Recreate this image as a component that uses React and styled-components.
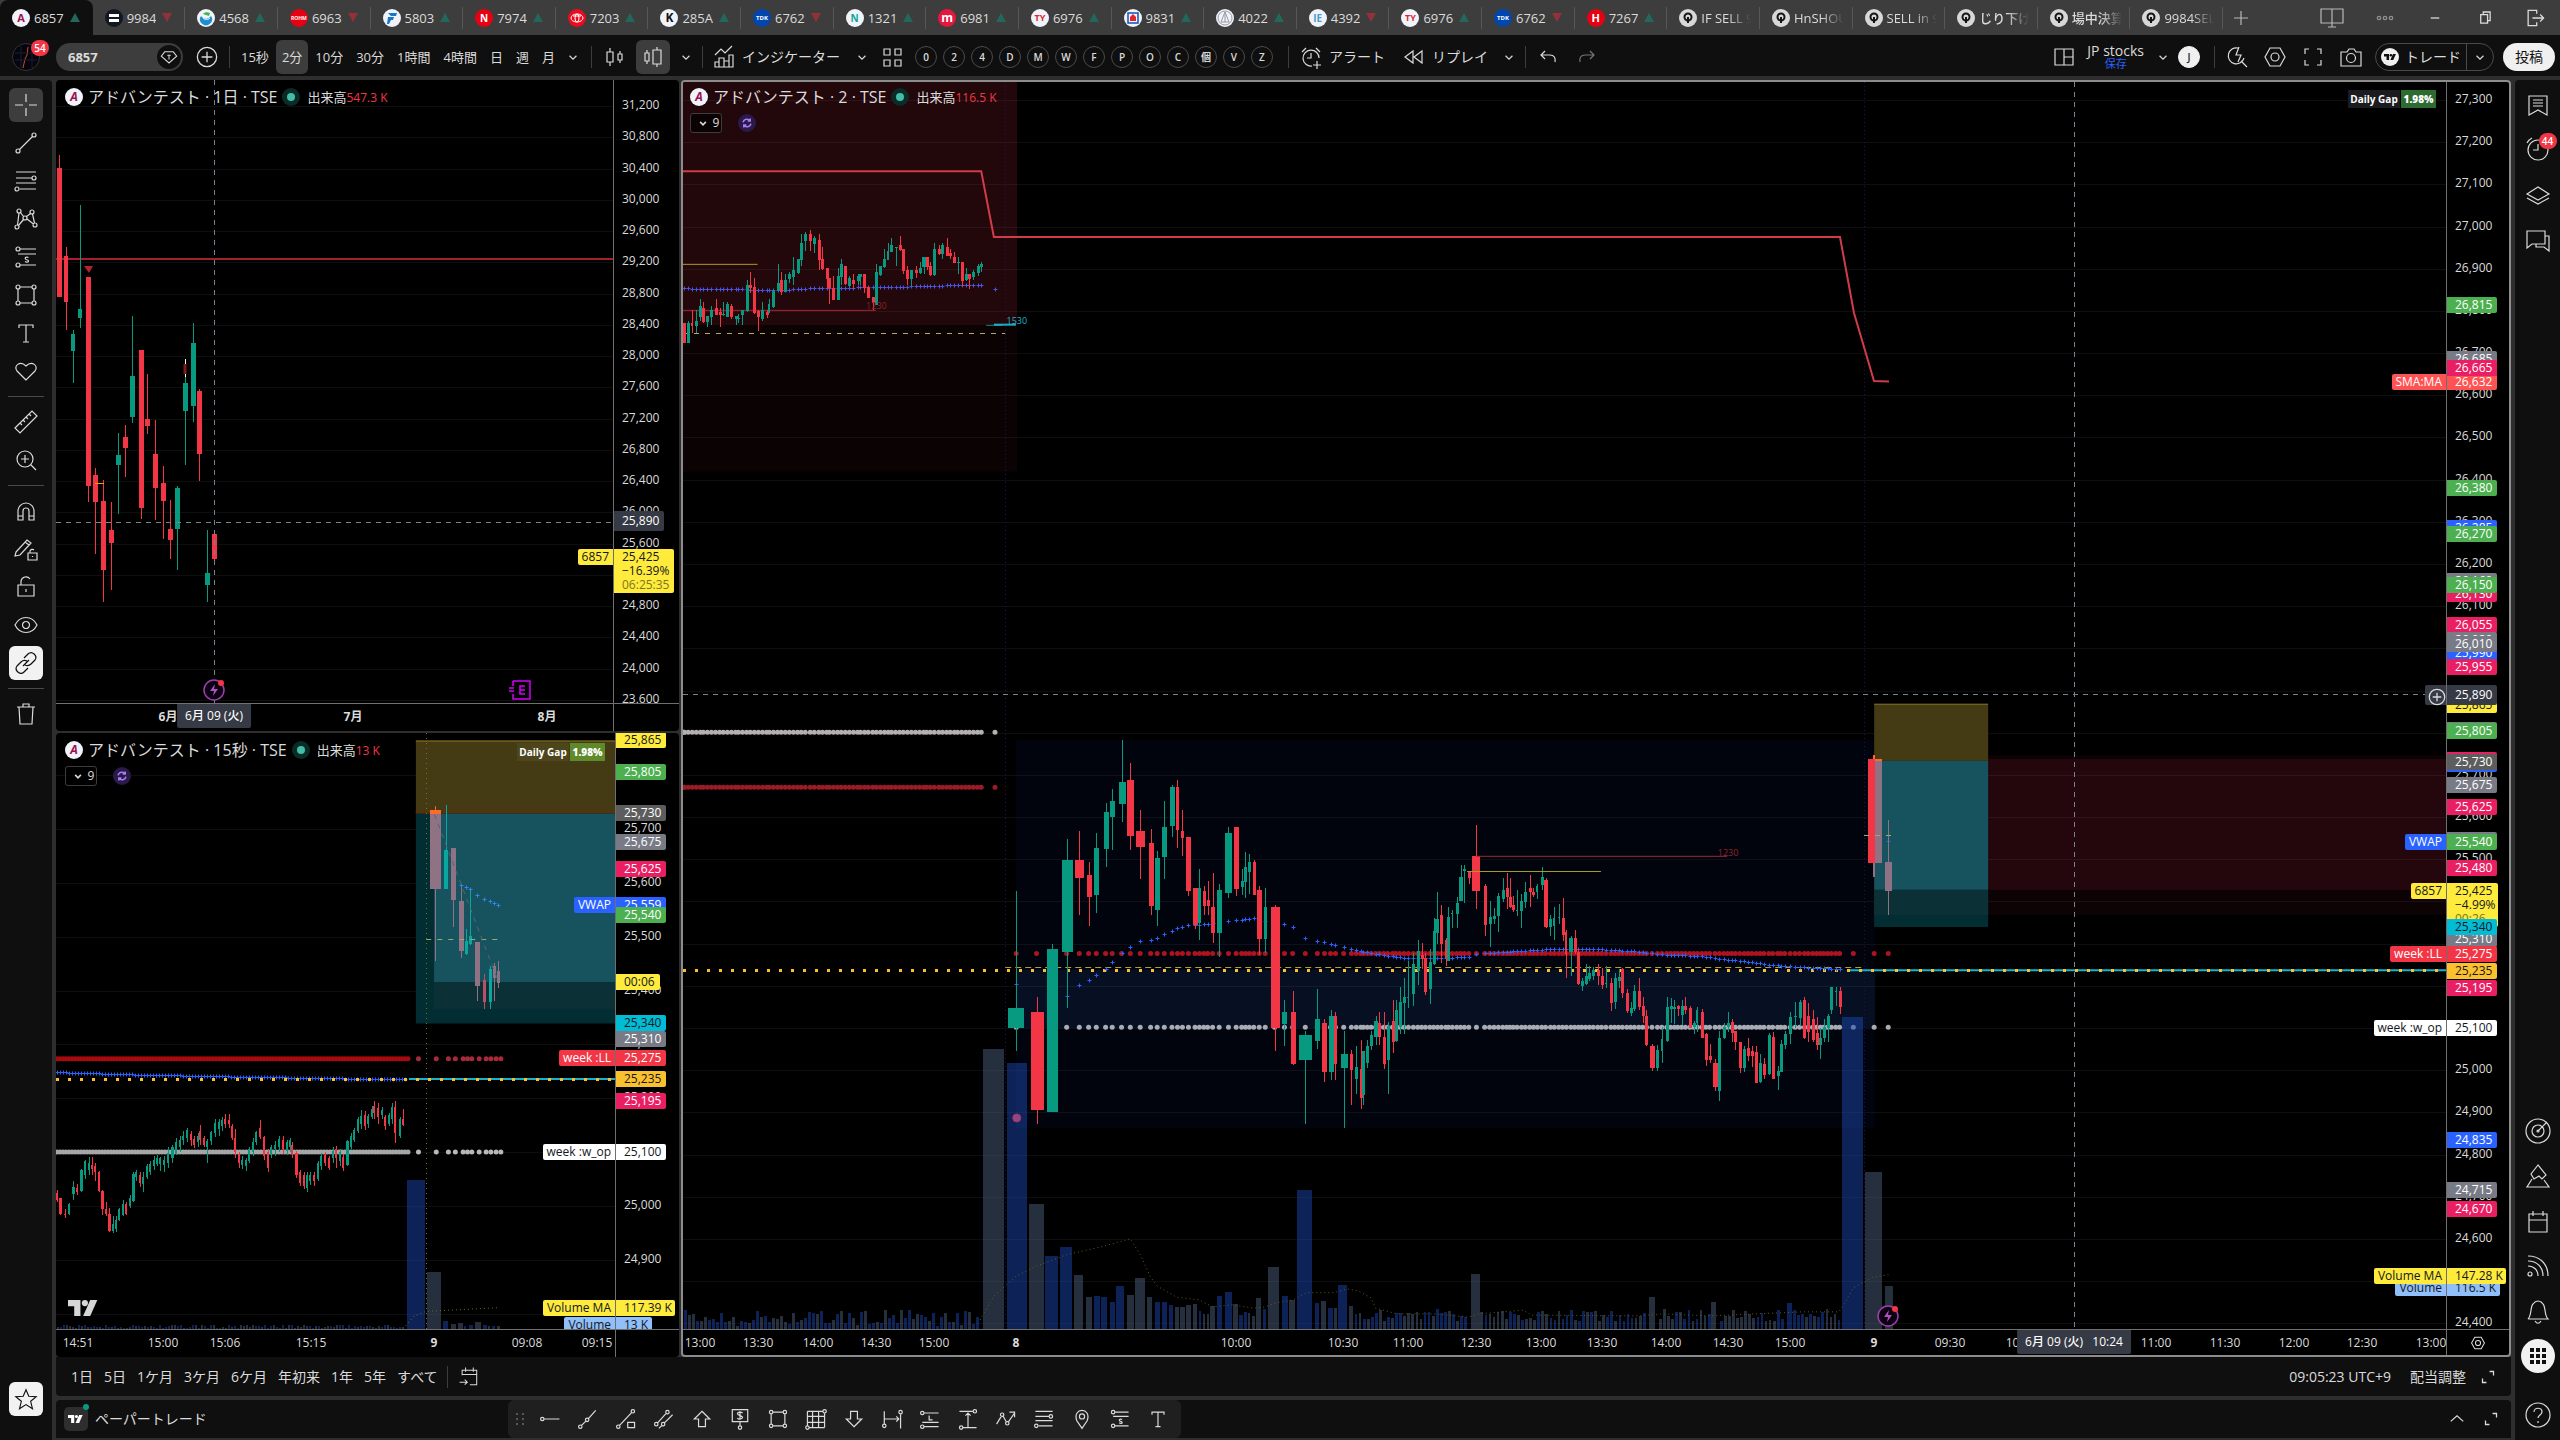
import React from "react";
import styled, { createGlobalStyle } from "styled-components";

const Global = createGlobalStyle`
  *, *::before, *::after { box-sizing: border-box; }
  body { margin: 0; background: #2e2e2e; color: #dbdbdb;
    font: 14px/18px "Open Sans", "Noto Sans CJK JP", sans-serif; }
  button, input { font: inherit; color: inherit; background: none; border: 0; padding: 0; margin: 0; }
  svg { display: block; flex: none; }
`;

const C = { up: "#089981", down: "#f23645", mauve: "#8f7385", aqua: "#0aa6a0", orange: "#ff6a2a", rose: "#b85068" };
const BG = {
  green: "#4caf50", pink: "#e91e63", gray: "#787b86", ash: "#5d5d5d", blue: "#2962ff", yellow: "#ffeb3b",
  cyan: "#00bcd4", red: "#f23645", coral: "#ff5252", amber: "#fbc02d", white: "#ffffff", sky: "#90bff9", slate: "#363a45",
};
const DARK_TEXT = ["yellow", "cyan", "amber", "white", "sky"];

/* ---------- icons, drawn on a 28px grid ---------- */
const c = (x, y, r) => `M${x - r} ${y}a${r} ${r} 0 1 0 ${2 * r} 0a${r} ${r} 0 1 0 ${-2 * r} 0`;
const ICONS = {
  cross: "M14 3v8M14 17v8M3 14h8M17 14h8",
  trend: c(6, 22, 2) + c(22, 6, 2) + "M7.5 20.5l13-13",
  fib: "M4 5h20M4 11h16M4 16h20M8 22h16" + c(22, 11, 2) + c(5, 22, 2),
  pattern: c(7, 6, 2) + c(20, 7, 2) + c(5, 22, 2) + c(23, 20, 2) + c(13, 13, 2) + "M5.500 20L7 8M8.500 7.500l3 4M14.500 11.500l4-3M20.500 9l2 9M6.500 20.500l5-6M15 14l6.500 5",
  forecast: c(6, 6, 2) + c(6, 22, 2) + "M8 6h16M6 11h18M8 22h16M16.500 14.500c-2-1-4 0-3 1.500s3 .5 3 2-2 1.500-3.500.5",
  rect: c(6, 6, 2) + c(22, 6, 2) + c(6, 22, 2) + c(22, 22, 2) + "M8 6h12M8 22h12M6 8v12M22 8v12",
  text: "M7 9V6h14v3M14 6v17M11 23h6",
  heart: "M14 23L5 14c-4-5 3-11 9-5c6-6 13 0 9 5z",
  ruler: "M3 20L20 3l5 5L8 25zM8 15l2 2M11 12l2 2M14 9l2 2M17 6l2 2",
  zoom: c(13, 13, 8) + "M19 19l5 5M13 9v8M9 13h8",
  magnet: "M6 23v-9a8 8 0 0 1 16 0v9h-5v-9a3 3 0 0 0-6 0v9zM6 19h5M17 19h5",
  penlock: "M4 17L15 5l4 3L8 20l-5 1zM13 7l4 3M16 18h9v7h-9zM18 18v-2a2.500 2.500 0 0 1 4-1M20.500 21v1",
  lock: "M6 12h16v11H6zM9 12V8a5 5 0 0 1 9-2M14 16v3",
  eye: "M3 14c5-10 17-10 22 0c-5 10-17 10-22 0z" + c(14, 14, 3.5),
  link: "M12 9l4-4c4-4 10 2 7 6l-4 4c-2 2-4 2-6 1M16 19l-4 4c-4 4-10-2-7-6l4-4c2-2 4-2 6-1M11 17l6-6",
  trash: "M5 7h18M7 7l1 17h12l1-17M11 7V4h6v3",
  star: "M14 4l3 7 8 .5-6 5 2 8-7-4.500-7 4.500 2-8-6-5 8-.5z",
  plusC: c(14, 14, 9) + "M14 9v10M9 14h10",
  gem: "M9 8h10l4 5-9 8-9-8zM14 12v5M12 12h4",
  chev: "M10 12.500l4 4 4-4",
  up: "M6 17l8-7 8 7",
  candles: "M9 5v4M9 19v4M6 9h6v10H6zM19 8v3M19 17v3M17 11h4v6h-4z",
  candlesB: "M8 7v3M8 18v3M6 10h4v8H6zM18 4v3M18 21v3M14 7h8v14h-8z",
  indic: "M5 24v-5h4v-4h5v3h5v-6h4v12zM9 19v5M14 18v6M19 18v6M5 12l6-6 4 4 7-7",
  grid: "M5 6h6v6H5zM16 6h6v6h-6zM5 17h6v6H5zM16 17h6v6h-6z",
  alarm: "M22 15a8 8 0 1 0-7 8M14 10v5h-4M5 9l4-4M19 5l4 4M20 18v8M16 22h8",
  replay: "M13 8v12l-8-6zM22 8v12l-8-6z",
  undo: "M11 8l-4 4 4 4M7 12h9c4 0 6 3 5 7",
  redo: "M17 8l4 4-4 4M21 12h-9c-4 0-6 3-5 7",
  layout: "M5 6h18v16H5zM14 6v16M14 14h9",
  bolt: "M21 15a8 8 0 1 1-6-10M18 18l6 6M16 4l-3 8h5l-3 7",
  hex: "M9 5h10l5 9-5 9H9l-5-9z" + c(14, 14, 4),
  full: "M10 6H6v5M18 6h4v5M10 22H6v-5M18 22h4v-5",
  cam: "M4 9h6l2-3h5l2 3h5v14H4z" + c(14, 15, 4.5),
  tabs: "M3 5h22v14H3zM14 5v18M10 23h8",
  more: c(7, 14, 2) + c(14, 14, 2) + c(21, 14, 2),
  min: "M9 14h10",
  restore: "M9 10h8v10H9zM12 10V7h8v10h-3",
  exit: "M16 9V5H6v18h10v-4M11 14h13M20 10l4 4-4 4",
  plus: "M14 7v14M7 14h14",
  book: "M5 5h18v19l-9-5-9 5zM9 9h10M9 12h10M9 15h10",
  clock: c(14, 14, 10) + "M14 8v6H9M3 7c1-2 3-4 5-5",
  layers: "M3 13l11-7 11 7-11 6zM3 17l11 6 11-6",
  chat: "M3 5h18v13H8l-5 4zM21 10h4v15l-5-4h-8v-3",
  radar: c(14, 14, 12) + c(14, 14, 6) + c(14, 14, 1) + "M14 14l9-9",
  peaks: "M14 3l-7 9 3 5 5-3 3 3 4-4zM8 17l-5 8h22l-5-7",
  cal: "M5 7h18v18H5zM5 13h18M9 4v5M19 4v5",
  feed: c(6, 22, 2) + "M4 14c6 0 10 4 10 10M4 9c9 0 15 6 15 15M4 4c12 0 20 8 20 20",
  bell: "M4 22h20c-4-4-2-12-5-15c-3-4-7-4-10 0c-3 3-1 11-5 15M11 24c2 3 4 3 6 0",
  help: c(14, 14, 12) + "M10 11c0-5 8-5 8 0c0 3-4 3-4 6M14 20v2",
  goto: "M6 12V6h17v17h-8M6 11h17M10 3v5M19 3v5M3 20h9M9 17l3 3-3 3",
  expand: "M16 7h5v5M12 21H7v-5",
  hray: c(5, 14, 2) + "M7 14h18",
  ray: c(5, 23, 2) + c(13, 15, 2) + "M6.500 21.500l5-5M14.500 13.500L23 4",
  rayInfo: c(5, 23, 2) + c(22, 5, 2) + "M6.500 21.500L20.500 6.500M16 18h8v6h-8z",
  channel: c(5, 20, 2) + c(18, 6, 2) + c(13, 20, 2) + "M6.500 18.500l10-11M8 25l3.500-3.500M14.500 18.500L24 9",
  arrowUp: "M14 5l9 9h-5v9h-8v-9H5z",
  arrowDn: "M14 23l9-9h-5V5h-8v9H5z",
  price: "M5 3h18v14H5zM14 17v5M17 7c-2-2-6-1-6 1s6 2 6 4-5 3-6 1M14 5v10" + c(14, 24, 2),
  gann: "M4 5h18M4 5v17M24 7v17M6 24h18M10 5v19M17 5v19M4 11h20M4 18h20" + c(24, 5, 2) + c(4, 24, 2),
  range: "M5 5v15M24 8v17M5 14h17M19 11l3 3-3 3" + c(24, 6, 2) + c(5, 22, 2),
  longp: c(5, 7, 2) + c(5, 23, 2) + "M7 7h17M5 18h19M7 23h17M13 10v5h4",
  vrange: c(22, 5, 2) + c(6, 24, 2) + "M4 5h16M8 24h16M14 7v17M11 10l3-3 3 3",
  path: "M3 20l6-10M10.500 10.500l4 7M17 17l7-10M18 6h6v6" + c(9.500, 9, 2) + c(15.500, 19, 2),
  pin: "M14 25L8 16c-6-16 18-16 12 0z" + c(14, 11, 3),
  sync: "M8 13a6 6 0 0 1 11-2M20 15a6 6 0 0 1-11 2M19 7v4h-4M9 21v-4h4",
};
const Icon = ({ n, s = 28, w = 1.2 }) => (
  <svg width={s} height={s} viewBox="0 0 28 28" fill="none" stroke="currentColor" strokeWidth={w} aria-hidden="true">
    <path d={ICONS[n]} />
  </svg>
);
const TvMark = ({ s = 28, fill = "#fff" }) => (
  <svg width={s} height={(s * 18) / 36} viewBox="0 0 36 18" fill={fill} aria-hidden="true">
    <path d="M0 0h14v18H7V7H0z" /><circle cx="19" cy="3.500" r="3.500" /><path d="M25 0h8l-8 18h-8z" />
  </svg>
);

/* company marks on an 18px disc */
const MARKS = {
  bars: <path d="M4 5h10v3H4zM4 10h10v3H4z" fill="#fff" />,
  leaf: <g fill="none"><path d="M4 7a6 6 0 1 0 10 0c-2 3-7 4-10 0z" fill="#1b8fd0" /><path d="M6 9c2 2 5 2 7 0" stroke="#fff" /><path d="M6 5c2-2 4-2 7-1l-1 3z" fill="#3fb54a" /></g>,
  wave: <path d="M5 4h9l-1 3H8zM5 8h6l-1 3H8l-2 4H4z" fill="#1677c8" />,
  ring: <g fill="none" stroke="#fff"><ellipse cx="9" cy="9" rx="6" ry="4" /><ellipse cx="9" cy="9" rx="2" ry="4" /><path d="M5 7h8" /></g>,
  house: <g><path d="M4 4h10v10H4z" fill="none" stroke="#1450b4" strokeWidth="1.500" /><path d="M9 5l3 3v4H6V8z" fill="#e0262c" /></g>,
  peak: <g fill="none" stroke="#9a9aa0"><circle cx="9" cy="9" r="7" /><path d="M9 3l-4 10h8zM9 3v10" /></g>,
};
const Mark = ({ n }) => <svg width="18" height="18" viewBox="0 0 18 18" aria-hidden="true">{MARKS[n]}</svg>;

/* ---------- page frame ---------- */
const Page = styled.div`
  min-height: 100vh; display: grid; grid-template-rows: 35px 41px minmax(0, 1fr);
  grid-template-columns: minmax(0, 1fr); overflow: hidden;
`;
const TabBar = styled.nav` display: flex; background: #3d3d3d; `;
const Tabs = styled.div` flex: 1; display: flex; min-width: 0; `;
const Tab = styled.button`
  flex: 1 1 0; min-width: 0; display: flex; align-items: center; gap: 4px; padding: 0 0 0 12px;
  font-size: 13px; font-weight: 500; overflow: hidden; white-space: nowrap; position: relative;
  background: ${(p) => (p.$on ? "#0f0f0f" : "transparent")};
  border-radius: ${(p) => (p.$on ? "8px 8px 0 0" : "0")};
  &::after { content: ""; position: absolute; right: 0; top: 7px; height: 22px; width: 1px; background: ${(p) => (p.$on ? "transparent" : "#575757")}; }
`;
const TabText = styled.span`
  min-width: 0; overflow: hidden; flex: ${(p) => (p.$fade ? "0 1 50px" : "none")};
  mask-image: ${(p) => (p.$fade ? "linear-gradient(90deg, #000 55%, transparent)" : "none")};
`;
const Arrow = styled.i`
  width: 0; height: 0; margin-left: 2px; border: 5px solid transparent;
  ${(p) => (p.$up ? "border-bottom: 9px solid #22685c; border-top: 0;" : "border-top: 9px solid #943038; border-bottom: 0;")}
`;
const Badge = styled.span`
  width: 18px; height: 18px; flex: none; border-radius: 50%; display: grid; place-items: center; overflow: hidden;
  background: ${(p) => p.$bg}; color: ${(p) => p.$fg}; font-size: ${(p) => p.$fs || 10}px; line-height: 18px; font-weight: 700;
`;
const WindowTools = styled.div`
  flex: none; width: 337px; display: flex; align-items: center; color: #b8b8b8; padding: 0 0 0 4px;
`;
const WindowBtn = styled.button` width: 50px; height: 35px; display: grid; place-items: center; color: ${(p) => (p.$dim ? "#8f8f8f" : "#dbdbdb")}; `;
const TOOLBAR_H = 34;
const ToolBar = styled.header`
  display: flex; align-items: center; background: #0f0f0f; padding: 3px 5px 0 12px; min-width: 0;
`;
const Tool = styled.button`
  height: ${TOOLBAR_H}px; min-width: ${(p) => p.$w || 0}px; padding: 0 ${(p) => p.$px || 0}px; display: flex; align-items: center;
  justify-content: center; gap: 4px; border-radius: 6px; white-space: nowrap; flex: none;
  font-size: ${(p) => p.$fs || 14}px; background: ${(p) => (p.$on ? "#3d3d3d" : "transparent")};
  opacity: ${(p) => (p.$dim ? 0.5 : 1)};
`;
const Sep = styled.span` width: 1px; height: 22px; background: #3d3d3d; flex: none; margin: 0 ${(p) => p.$m || 4}px; `;
const Row = styled.div` display: flex; align-items: center; gap: ${(p) => p.$g || 0}px; margin-left: ${(p) => p.$ml || 0}px; flex: none; `;
const Spacer = styled.div` flex: 1; `;
const Avatar = styled.div`
  width: 28px; height: 28px; border-radius: 50%; background: #050510; position: relative; flex: none; margin-right: 16px;
  border: 1px solid #333;
`;
const Count = styled.span`
  position: absolute; top: ${(p) => (p.$side ? 0 : -4)}px; right: ${(p) => (p.$side ? -2 : -10)}px; min-width: 18px; height: 16px; border-radius: 8px; background: #f23645; color: #fff;
  font-size: 10px; line-height: 16px; text-align: center; padding: 0 3px; font-weight: 600;
`;
const Search = styled.label`
  width: 127px; height: 28px; border-radius: 14px; background: #3d3d3d; display: flex; align-items: center; padding: 0 2px 0 12px; flex: none;
  input { flex: 1; min-width: 0; font-weight: 700; font-size: 13px; }
  span { width: 24px; height: 24px; border-radius: 50%; background: #0f0f0f; display: grid; place-items: center; }
`;
const Round = styled.button`
  width: 22px; height: 22px; border-radius: 50%; border: 1px solid ${(p) => (p.$solid ? "#f0f0f0" : "#4a4a4a")};
  background: ${(p) => (p.$solid ? "#f0f0f0" : "none")}; color: ${(p) => (p.$solid ? "#222" : "#dbdbdb")};
  font-size: 10px; font-weight: 600; line-height: 20px; text-align: center;
`;
const LayoutName = styled.button`
  display: flex; flex-direction: column; align-items: center; line-height: 14px; font-size: 14px; white-space: nowrap;
  small { font-size: 11px; line-height: 12px; color: #2962ff; }
`;
const Split = styled.div`
  height: 28px; border: 1px solid #4a4a4a; border-radius: 14px; display: flex; align-items: center; width: 119px; overflow: hidden;
  button { display: flex; align-items: center; gap: 6px; height: 26px; justify-content: center; white-space: nowrap; }
  button:first-child { flex: 1; border-right: 1px solid #4a4a4a; }
  button:last-child { width: 26px; }
`;
const Post = styled.button` height: 28px; width: 52px; border-radius: 14px; background: #f0f0f0; color: #0f0f0f; `;

const Body = styled.div`
  display: grid; grid-template-columns: 52px minmax(0, 1fr) 45px; gap: 4px; padding-top: 4px; min-height: 0;
`;
const Side = styled.aside`
  background: #0f0f0f; display: flex; flex-direction: column; align-items: center; gap: ${(p) => p.$gap}px;
  padding: ${(p) => (p.$right ? "8px 0" : "8px 0 24px")}; border-radius: ${(p) => (p.$right ? "4px 0 0 0" : "0 4px 0 0")};
`;
const SideBtn = styled.button`
  width: 34px; height: 34px; border-radius: ${(p) => (p.$round ? "50%" : "6px")}; display: grid; place-items: center; position: relative; flex: none;
  background: ${(p) => (p.$tone === "on" ? "#3d3d3d" : p.$tone === "white" ? "#f2f2f2" : "none")};
  color: ${(p) => (p.$tone === "white" ? "#0f0f0f" : "#dbdbdb")};
`;
const HelpSlot = styled.div` padding-top: 14px; `;
const SideSep = styled.span` width: 36px; height: 1px; background: #4a4a4a; margin: 4px 0; flex: none; `;
const Center = styled.main` display: grid; grid-template-rows: minmax(0, 1fr) 39px 44px; min-width: 0; min-height: 0; `;
const Charts = styled.div`
  display: grid; grid-template-columns: minmax(0, 623fr) minmax(0, 1830fr); grid-template-rows: minmax(0, 651fr) minmax(0, 624fr);
  gap: 2px; min-height: 0;
`;
const Panel = styled.section`
  background: #000; border-radius: 4px; overflow: hidden; min-width: 0; min-height: 0;
  display: grid; grid-template-columns: minmax(0, 1fr) ${(p) => p.$scale}px; grid-template-rows: minmax(0, 1fr) ${(p) => (p.$active ? 26 : 28)}px;
  ${(p) => p.$active && "grid-column: 2; grid-row: 1 / 3; border: 2px solid #8c8c8c;"}
`;
const Plot = styled.div` position: relative; overflow: hidden; min-width: 0; min-height: 0; `;
const Canvas = styled.svg` position: absolute; inset: 0; width: 100%; height: 100%; `;
const Scale = styled.div` position: relative; overflow: hidden; border-left: 1px solid #6f6f6f; `;
const TimeAxis = styled.div` position: relative; overflow: hidden; border-top: 1px solid #6f6f6f; font-size: 12px; line-height: 16px; `;
const Corner = styled.div` border-left: 1px solid #6f6f6f; border-top: 1px solid #6f6f6f; display: grid; place-items: center; `;
const Tick = styled.span` position: absolute; left: 8px; margin-top: -9px; font-size: 12px; line-height: 16px; font-weight: 500; `;
const PriceTag = styled.span`
  position: absolute; left: 0; margin-top: -8px; width: ${(p) => p.$w || 50}px; padding-left: 8px; font-size: 12px; line-height: 16px; white-space: nowrap;
  font-weight: 500; border-radius: 0 2px 2px 0; background: ${(p) => BG[p.$bg]}; color: ${(p) => (DARK_TEXT.includes(p.$bg) ? "#131722" : "#fff")};
  ${(p) => p.$tall && "padding-top: 2px; padding-bottom: 2px; margin-top: -10px; z-index: 2;"}
`;
const Stack = styled(PriceTag)` line-height: 14px; padding-top: 1px; padding-bottom: 1px; span { display: block; } span + span + span { color: #7d7420; } `;
const NameTag = styled.span`
  position: absolute; right: 0; margin-top: -8px; padding: 0 4px; font-size: 12px; line-height: 16px; white-space: nowrap; border-radius: 2px 0 0 2px;
  background: ${(p) => BG[p.$bg]}; color: ${(p) => (DARK_TEXT.includes(p.$bg) ? "#131722" : "#fff")};
`;
const PlusTag = styled.button`
  position: absolute; right: 0; margin-top: -10px; width: 21px; height: 20px; background: #363a45; display: grid; place-items: center; border-radius: 2px 0 0 2px;
`;
const TimeTick = styled.span` position: absolute; top: 5px; transform: translateX(-50%); white-space: nowrap; font-weight: ${(p) => (p.$b ? 700 : 500)}; `;
const TimeTag = styled.span`
  position: absolute; top: 0; transform: translateX(-50%); height: 24px; line-height: 24px; padding: 0 8px; background: #363a45; color: #fff; white-space: pre;
  border-radius: 0 0 2px 2px; font-weight: 500;
`;
const Legend = styled.div`
  position: absolute; left: ${(p) => (p.$main ? 7 : 9)}px; top: ${(p) => (p.$main ? 6 : 8)}px; display: flex; flex-direction: column; gap: 8px; align-items: flex-start;
`;
const LegendRow = styled.div` display: flex; align-items: center; gap: 5px; height: 18px; white-space: nowrap; `;
const Title = styled.h2` margin: 0; font-size: 16px; line-height: 18px; font-weight: 400; `;
const Live = styled.i` width: 18px; height: 18px; border-radius: 50%; background: #0a2b26; display: grid; place-items: center; &::after { content: ""; width: 8px; height: 8px; border-radius: 50%; background: #42bda8; } `;
const Vol = styled.span` font-size: 13px; margin-left: 2px; b { font-weight: 400; color: #f23645; font-size: 12px; } `;
const Fold = styled.button`
  width: 32px; height: 20px; border: 1px solid #3d3d3d; border-radius: 3px; display: flex; align-items: center; justify-content: center; font-size: 12px; line-height: 16px; background: #000a;
`;
const SyncMark = styled.span` width: 18px; height: 18px; border-radius: 50%; background: #2a1a4a; color: #a67cf0; display: grid; place-items: center; margin-left: 11px; `;
const Gap = styled.div`
  position: absolute; right: 10px; top: ${(p) => p.$top}px; display: flex; gap: 1px; font-size: 10px; line-height: 18px; font-weight: 700; color: #fff;
  span { background: ${(p) => (p.$warm ? "#4d461c" : "#1b1c20")}; width: 52px; text-align: center; white-space: nowrap; }
  b { background: ${(p) => (p.$warm ? "#5f8a2c" : "#2e6b30")}; width: 35px; text-align: center; }
`;
const Watermark = styled.div` position: absolute; left: 12px; bottom: 13px; `;

const RangeBar = styled.div` background: #0f0f0f; border-radius: 0 0 4px 4px; display: flex; align-items: center; gap: 11px; padding: 0 12px 0 15px; white-space: nowrap; `;
const TextBtn = styled.button` white-space: nowrap; `;
const TradeBar = styled.div` margin-top: 4px; background: #0f0f0f; border-radius: 4px 4px 0 0; display: flex; min-width: 0; margin-bottom: 2px; align-items: center; padding-right: 9px; `;
const Paper = styled.div`
  width: 452px; padding-left: 8px; display: flex; align-items: center; gap: 7px; flex: none;
  i { width: 24px; height: 24px; border-radius: 5px; background: #2e2e2e; display: grid; place-items: center; position: relative; }
  i::after { content: ""; position: absolute; right: -1px; top: -3px; width: 6px; height: 6px; border-radius: 50%; background: #089981; }
`;
const Floating = styled.div`
  display: flex; align-items: center; height: 38px; background: #1f1f1f; border-radius: 6px; padding: 0 4px 0 7px; flex: none;
  button { width: 38px; height: 34px; display: grid; place-items: center; }
`;

/* ---------- chart series ---------- */
const parse = (s) => s.trim().split(/\s+/).map((r) => {
  const v = r.split(",");
  return { x: +v[0], w: +v[1], h: +v[2], t: +v[3], b: +v[4], l: +v[5], k: v[6] };
});
const COLORS = { g: C.up, r: C.down, m: C.mauve, a: C.aqua, o: C.orange, p: C.rose };
const Candles = ({ data, fx, fy, sx }) => (
  <g shapeRendering="crispEdges">
    {data.map((d, i) => {
      const w = Math.max(2, Math.round(d.w / sx));
      const x = Math.round(fx(d.x));
      const t = Math.round(fy(d.t));
      const h = Math.round(fy(d.h));
      return (
        <g key={i} fill={COLORS[d.k]}>
          <rect x={x} y={h} width="1" height={Math.max(1, Math.round(fy(d.l)) - h)} />
          <rect x={x - Math.floor(w / 2)} y={t} width={w} height={Math.max(1, Math.round(fy(d.b)) - t)} />
        </g>
      );
    })}
  </g>
);
const lerp = (pts, x) => {
  for (let i = 1; i < pts.length; i++) if (x <= pts[i][0]) {
    const [a, b] = [pts[i - 1], pts[i]];
    return a[1] + ((b[1] - a[1]) * (x - a[0])) / (b[0] - a[0]);
  }
  return pts[pts.length - 1][1];
};
const Crosses = ({ pts, color = "#2962ff" }) => (
  <path d={pts.map(([x, y]) => `M${Math.round(x) - 1.5} ${Math.round(y) + 0.5}h4M${Math.round(x) + 0.5} ${Math.round(y) - 1.5}v4`).join("")} stroke={color} fill="none" />
);
const Dots = ({ xs, y, color, r = 2.5 }) => <g fill={color}>{xs.map((x, i) => <circle key={i} cx={x} cy={y} r={r} />)}</g>;
const Squares = ({ from, to, y }) => <line x1={from} x2={to} y1={y} y2={y} stroke="#fbc02d" strokeWidth="3" strokeDasharray="3 9" shapeRendering="crispEdges" />;
const Grid = ({ ys }) => <path d={ys.map((y) => `M0 ${Math.round(y) + 0.5}H3000`).join("")} stroke="#0e0e0f" />;
const noise = (i) => { const v = Math.sin(i * 12.9898 + 4.1) * 43758.5453; return v - Math.floor(v); };
const Bars = ({ data, base }) => (
  <g shapeRendering="crispEdges">{data.map(([a, b, t, k], i) => (
    <rect key={i} x={Math.round(a)} y={Math.round(t)} width={Math.max(1, Math.round(b) - Math.round(a))} height={Math.max(0, base - Math.round(t))} fill={k === "b" ? "#1a45b0" : "#4b5d79"} fillOpacity=".5" />
  ))}</g>
);
const Flash = ({ x, y }) => (
  <g transform={`translate(${x} ${y})`}>
    <circle r="10" fill="#0a0010" stroke="#9c3fae" strokeWidth="1.500" />
    <path d="M1-6l-5 7h4l-1 5 5-7H0z" fill="#b050c4" /><circle cx="7" cy="-7" r="3" fill="#f23645" />
  </g>
);

const DAY = parse(`135,12,178,209,516,516,r 153,10,397,418,527,594,r 169,10,594,603,643,720,g 185,10,297,544,565,589,g
204,12,468,468,965,1003,r 220,11,922,938,1003,1126,r 238,11,950,1000,1164,1240,r 255,11,1003,1069,1100,1212,r 273,12,839,891,915,1031,g
289,11,820,848,874,943,r 305,11,561,703,801,815,g 324,12,641,641,1017,1043,r 340,12,698,805,822,841,r 358,11,808,889,969,1045,r
375,11,917,957,1000,1090,r 393,11,998,1067,1093,1138,r 409,11,965,969,1067,1164,g 427,11,663,720,786,915,g 444,11,577,625,774,813,g
460,11,734,739,889,953,r 478,11,1069,1171,1200,1240,g 494,11,1079,1079,1138,1145,r`);

const SEC = parse(`132,3,1024,1030,1045,1050,r 139,6,1040,1041,1077,1078,r 149,5,1065,1075,1078,1085,r 158,3,1052,1054,1075,1078,g 169,8,1005,1017,1032,1045,g
178,3,1010,1019,1027,1035,r 187,6,978,981,1026,1028,g 196,5,958,960,990,1000,g 205,4,952,965,980,990,g 212,4,952,970,978,990,r 220,5,965,972,985,1005,r
228,5,982,984,1025,1028,r 236,6,1024,1025,1065,1078,r 244,5,1050,1065,1075,1080,r 252,7,1062,1075,1112,1115,r 261,5,1080,1098,1112,1117,g
268,5,1080,1090,1108,1115,g 275,4,1062,1065,1090,1092,g 283,4,1045,1055,1078,1080,g 291,4,1050,1055,1075,1078,r 299,5,1035,1040,1058,1062,g
306,7,985,988,1048,1050,g 314,4,980,985,995,1005,g 322,4,985,990,1008,1018,r 330,5,985,995,1010,1028,g 338,5,968,972,995,1000,g 346,4,960,968,985,992,g
354,4,950,958,972,980,g 362,4,948,955,968,972,g 370,4,952,955,968,982,g 379,5,950,958,970,985,g 388,5,930,942,965,975,g 397,6,925,930,955,965,g
405,5,910,920,945,948,g 414,4,905,915,930,940,g 423,4,895,905,915,925,g 432,4,888,892,910,920,g 440,4,895,902,915,928,r 448,4,905,912,925,932,r
456,4,900,905,920,930,g 462,4,882,895,915,925,r 470,4,905,910,925,930,r 478,5,912,918,930,965,g 487,5,895,898,918,925,g 496,5,870,878,900,908,g
504,5,868,875,890,905,g 513,5,865,872,885,895,g 520,5,858,868,880,888,r 527,5,858,872,880,888,r 534,5,880,884,910,915,r 542,5,890,910,940,955,r
550,5,940,945,965,975,r 558,4,950,958,970,978,g 567,4,955,958,972,982,g 575,4,930,935,960,965,g 583,5,910,920,940,950,g 591,5,895,898,920,925,g
599,5,872,888,908,912,r 608,5,905,908,950,958,r 617,4,935,940,975,985,r 626,5,925,930,948,955,g 635,4,918,925,935,950,g 644,4,905,912,930,940,g
653,4,905,915,935,945,r 662,4,915,920,938,948,g 668,4,910,915,930,940,g 674,4,920,925,945,955,r 682,6,938,942,990,998,r 692,5,980,985,1008,1015,r
700,5,985,990,1015,1022,r 708,5,985,990,1020,1028,g 716,4,985,992,1005,1012,g 725,4,985,990,1005,1015,r 733,4,960,965,1000,1005,g 741,4,942,950,972,980,g
750,4,940,948,965,972,r 759,4,950,955,975,980,r 767,4,930,938,955,965,g 775,4,928,935,955,975,r 784,4,935,940,960,972,g 792,4,945,952,975,982,r
801,6,915,918,970,972,g 809,5,900,905,930,935,g 817,5,888,892,915,920,g 825,4,865,870,895,900,g 833,4,850,862,880,890,g 841,4,852,860,885,892,r
849,4,858,862,880,888,g 857,4,840,848,865,870,g 863,4,830,840,855,870,r 871,4,835,845,865,880,r 880,4,842,850,860,868,g 888,5,860,865,885,892,r
896,4,855,860,880,885,g 905,5,835,842,870,880,g 912,5,830,842,900,922,r 922,4,865,870,905,910,g 930,3,848,870,882,885,r
1002,26,187,204,368,525,m 1002,26,189,196,204,204,o 1029,10,185,283,368,368,a 1045,11,279,279,392,450,m 1062,11,357,394,503,518,m 1075,6,455,482,510,512,a
1084,6,365,470,487,490,a 1100,11,484,484,579,612,m 1117,7,553,567,614,629,p 1129,7,536,542,614,629,a 1140,6,530,536,562,612,m 1149,6,524,547,572,584,m`);

const PREV = parse(`11,8,549,549,608,608,r 20,7,543,549,608,608,g 30,6,510,549,558,580,r 40,7,510,543,558,580,g 50,7,476,498,531,543,g 57,7,486,504,546,549,r
67,7,528,528,546,560,g 77,7,498,510,531,555,g 87,7,476,504,525,525,r 97,7,504,516,525,560,r 106,7,486,521,525,528,g 116,8,486,492,531,531,g 126,8,492,498,531,537,r
136,7,528,528,537,555,g 143,7,522,533,537,549,g 153,8,510,510,525,555,g 163,8,420,435,513,516,g 172,7,396,435,444,459,r 182,7,414,441,519,522,r 192,7,510,513,531,573,r
202,7,486,510,537,543,g 212,7,510,516,525,534,r 219,6,476,492,519,520,g 229,7,447,453,501,504,g 239,7,372,429,453,453,g 248,7,396,420,456,465,r 258,7,402,420,456,456,g
268,7,396,402,416,429,g 278,7,351,390,411,435,g 288,8,357,357,399,402,g 297,7,282,309,360,378,g 307,8,276,282,303,333,g 319,8,270,282,303,333,r 329,7,288,294,312,339,g
340,7,282,300,360,390,r 349,7,321,357,387,390,r 359,7,384,384,416,447,r 366,7,414,414,444,492,r 376,8,408,444,480,480,r 386,8,384,408,480,480,g 395,7,357,372,411,435,g
405,7,378,378,432,435,r 415,7,408,414,438,441,g 425,7,402,420,432,447,r 435,7,402,408,423,435,g 442,7,402,402,411,435,g 452,8,402,402,444,459,r 461,7,438,441,474,474,r
472,7,471,471,489,510,r 481,7,372,396,495,495,g 491,7,378,378,405,408,g 501,7,327,357,381,384,g 510,6,309,333,360,360,g 518,8,294,315,336,336,g 528,7,321,321,324,378,g
538,7,288,315,330,333,r 547,7,327,327,393,402,r 557,7,378,390,416,435,r 567,7,390,390,416,438,g 577,7,378,390,399,414,r 587,7,366,384,399,402,g 597,9,351,351,381,402,g
604,7,351,351,381,390,r 613,7,366,378,405,408,r 623,7,309,327,405,408,g 634,7,315,327,342,345,r 643,8,309,315,342,357,g 653,7,294,321,348,348,r 662,7,327,339,348,357,r
672,7,336,351,369,369,r 680,7,351,366,369,402,g 690,7,366,366,423,438,r 700,7,384,402,420,423,g 709,7,402,402,416,447,r 719,7,390,396,411,420,g 729,7,372,378,399,408,g
738,7,366,372,381,396,g`);

const DAY8 = parse(`66,30,420,706,755,812,g 103,24,679,715,955,990,r 132,20,550,560,960,960,g 158,20,292,343,568,706,g 181,17,272,343,387,478,r 198,9,348,380,434,505,r
212,9,277,314,429,473,g 229,9,203,225,316,360,g 241,9,169,198,238,318,g 258,12,49,152,206,250,g 274,13,105,147,284,318,r 292,17,220,272,311,390,r 311,9,267,301,456,478,r
323,9,322,338,465,505,g 336,9,198,262,336,390,g 350,9,160,164,260,287,g 360,6,147,164,269,313,r 369,6,220,272,289,333,r 380,9,287,287,419,431,r 392,9,412,412,502,512,r
400,6,365,412,497,539,g 408,6,407,419,456,478,r 415,6,395,441,456,478,r 424,8,375,458,522,546,r 436,9,402,416,522,580,g 453,12,262,277,424,436,g 467,9,262,262,414,430,r
477,5,365,395,409,429,g 484,6,323,360,397,436,g 491,6,328,348,372,426,g 499,6,343,348,429,429,r 509,9,407,416,537,575,r 520,5,412,458,537,570,g 537,17,453,458,755,812,r
555,9,686,715,745,799,g 570,9,664,715,843,845,r 593,23,762,772,832,990,g 615,9,659,733,786,806,g 628,9,733,742,862,887,r 639,9,710,725,862,882,g 648,6,715,725,843,882,r
663,13,762,818,853,1000,g 677,5,808,818,857,943,r 686,5,799,851,880,916,g 694,6,784,855,926,953,r 699,5,812,812,919,943,g 706,5,784,799,840,853,g 713,6,762,772,799,809,g
721,7,725,737,776,796,g 728,5,715,742,776,796,r 736,6,715,776,843,855,r 743,6,740,750,833,916,g 752,5,686,737,789,817,r 758,5,686,711,786,789,g 765,6,654,691,752,770,g
773,6,632,679,694,770,g 781,2,591,679,680,706,g 790,5,571,598,671,701,g 798,6,539,566,615,650,g 805,5,546,575,585,610,r 812,6,570,582,666,673,r 820,6,561,593,660,696,g
827,6,485,517,598,600,g 834,7,421,488,522,549,g 841,6,453,478,549,595,r 849,6,534,539,582,603,r 854,6,458,482,590,590,g 861,4,465,473,475,509,g 869,5,434,448,475,510,g
876,7,355,385,443,443,g 883,5,355,365,370,448,g 891,6,370,370,387,403,r 905,15,257,333,419,463,r 920,6,403,407,502,529,r 929,6,444,482,500,556,g 937,5,461,480,488,500,g
945,6,424,431,480,519,g 953,6,387,416,439,446,g 960,6,375,412,434,463,r 966,5,387,434,458,461,r 972,6,431,453,465,470,r 979,4,416,465,468,480,g 987,6,427,444,467,510,g
994,6,397,422,446,461,g 1002,6,380,412,422,458,r 1009,6,412,422,429,434,r 1016,4,402,407,422,439,g 1024,5,360,385,404,416,g 1031,7,387,392,507,510,r 1040,5,477,488,507,529,g
1047,4,458,485,505,539,g 1055,3,450,483,485,500,g 1062,6,436,485,527,542,r 1069,4,514,519,573,632,r 1077,7,529,534,568,627,g 1084,6,514,534,568,573,r 1091,6,561,568,647,650,r
1097,6,632,639,652,664,g 1104,6,598,627,647,650,g 1111,5,603,620,635,640,g 1118,5,605,613,627,637,g 1126,5,598,613,627,650,r 1133,5,608,627,650,660,r 1141,3,603,645,648,657,g
1150,6,632,645,693,713,r 1157,6,620,632,691,708,g 1164,6,610,630,640,657,g 1171,5,608,610,669,681,r 1179,6,659,669,713,718,r 1186,5,691,706,717,725,g 1193,6,650,664,708,713,g
1201,6,632,664,703,710,r 1208,5,679,701,725,742,r 1215,6,710,725,796,799,r 1225,9,794,799,853,860,r 1235,5,796,808,853,860,g 1243,4,752,782,811,840,g 1252,6,679,703,786,790,g
1259,5,681,701,708,742,g 1266,5,686,703,708,745,g 1272,5,698,701,708,725,r 1279,5,686,701,723,747,g 1286,5,679,701,710,720,r 1294,6,701,706,755,755,r 1301,6,737,742,752,770,g
1308,4,703,710,742,765,g 1316,5,708,715,779,779,r 1323,6,767,770,833,848,r 1330,5,794,823,833,840,r 1340,9,830,840,899,909,r 1348,5,762,779,909,933,g 1356,5,742,752,779,782,g
1363,6,715,742,752,765,g 1370,5,732,740,767,790,r 1377,5,762,762,789,808,r 1385,6,789,789,853,865,r 1393,6,799,806,852,862,g 1400,6,779,804,823,835,r 1407,5,799,811,823,850,r
1415,6,799,813,889,889,r 1422,6,818,840,887,890,g 1429,5,828,843,869,880,r 1438,5,767,772,867,870,g 1445,5,765,776,880,880,r 1454,6,848,860,872,906,g 1460,5,784,794,862,862,g
1467,5,762,770,796,806,g 1477,6,715,728,770,794,g 1486,5,691,725,728,755,g 1494,6,686,691,730,750,g 1503,6,679,686,779,782,r 1510,5,694,725,765,789,r 1518,6,710,732,784,790,r
1525,6,727,767,796,809,r 1532,6,755,779,796,830,g 1538,5,732,752,779,789,g 1545,5,720,725,755,789,g 1552,6,654,654,710,720,g 1560,3,654,663,665,700,g 1567,5,654,664,703,720,r`);

const TODAY = parse(`146,15,222,222,455,455,r 161,15,227,227,455,455,m 161,15,222,222,227,227,o 153,2,213,213,222,222,o 153,2,455,455,486,486,m 182,15,358,452,517,571,m`);

const VWAP = [[66, 647], [158, 677], [181, 650], [198, 638], [212, 625], [229, 609], [241, 593], [258, 570], [274, 557], [292, 542], [311, 538], [323, 533], [336, 525], [349, 518], [360, 510], [380, 503], [415, 500], [453, 493], [499, 486], [555, 500], [570, 506], [593, 535], [628, 545], [663, 557], [700, 568], [743, 578], [780, 583], [850, 583], [891, 580], [905, 573], [950, 569], [1030, 562], [1130, 562], [1190, 566], [1250, 575], [1310, 578], [1360, 587], [1400, 592], [1440, 600], [1500, 606], [1568, 610]];
const VOLS = `5,44,806,s 49,86,840,b 89,117,1186,s 119,142,1313,b 146,168,1291,b 171,188,1360,s 193,204,1414,s 207,219,1411,b 221,232,1414,b 237,246,1426,b 248,263,1387,b 268,281,1409,s 283,301,1367,s
304,314,1414,s 319,328,1426,b 332,341,1426,b 344,352,1433,b 355,363,1438,s 365,373,1438,s 375,384,1433,s 388,396,1431,s 399,403,1448,b 407,411,1455,s 413,418,1455,s 420,428,1436,s 432,442,1411,b
447,459,1401,b 462,470,1431,s 473,479,1458,b 481,487,1450,b 489,493,1453,s 496,501,1460,s 503,512,1416,s 515,521,1443,b 525,545,1340,s 551,562,1411,b 564,574,1421,s 578,605,1151,b 610,618,1428,b
622,631,1423,s 634,643,1441,b 645,651,1441,s 653,669,1384,b 673,680,1436,s 895,912,1357,s 1220,1231,1414,s 1333,1342,1426,s 1471,1481,1428,b`.split(/\s+/).map((s) => s.split(",")).map(([a, b, t, k]) => [+a, +b, +t, k]);
const VOLMA = [[0, 1470], [25, 1412], [66, 1362], [103, 1338], [158, 1310], [220, 1291], [274, 1271], [292, 1310], [311, 1365], [323, 1387], [358, 1414], [400, 1421], [424, 1438], [460, 1433], [500, 1441], [520, 1438], [540, 1428], [570, 1421], [595, 1403], [645, 1403], [670, 1394], [690, 1399], [713, 1416], [721, 1441], [760, 1455], [830, 1455], [890, 1463], [910, 1455], [990, 1446], [1005, 1458], [1200, 1460], [1245, 1455], [1330, 1460], [1500, 1450], [1566, 1450], [1579, 1422], [1592, 1391], [1627, 1366], [1656, 1359]];

/* ---------- panels ---------- */
const range = (a, b, s) => Array.from({ length: Math.floor((a - b) / s) + 1 }, (_, i) => a - i * s);
const fmt = (n) => n.toLocaleString("en-US");
const Crosshair = ({ x, y }) => (
  <path d={`M${x}.5 0V3000M0 ${y}.5H3000`} stroke="#768390" strokeDasharray="5 5" fill="none" />
);
const Head = ({ main, period, vol, folded }) => (
  <Legend $main={main}>
    <LegendRow>
      <Badge $bg="#f0f3fa" $fg="#9c1150" $fs={12}><i>A</i></Badge>
      <Title>アドバンテスト · {period} · TSE</Title>
      <Live />
      <Vol>出来高<b>{vol}</b></Vol>
    </LegendRow>
    {folded && (
      <LegendRow>
        <Fold aria-label="9 indicators"><Icon n="chev" s={20} w={2.2} />9</Fold>
        <SyncMark><Icon n="sync" s={18} w={2.4} /></SyncMark>
      </LegendRow>
    )}
  </Legend>
);

function DailyPanel() {
  const y = (p) => 26 + (31200 - p) * 0.07815;
  const fx = (v) => v / 2.306 - 56;
  const fy = (v) => v / 2.376;
  const ticks = range(31200, 23600, 400);
  return (
    <Panel $scale={66}>
      <Plot>
        <Canvas>
          <Grid ys={ticks.map(y)} />
          <path d="M0 179H3000" stroke="#a81e2d" strokeWidth="2" />
          <Candles data={DAY} fx={fx} fy={fy} sx={2.306} />
          <path d="M28 186h9l-4 7z" fill="#b5222f" />
          <path d="M39 403.500h9" stroke="#ff9800" />
          <path d="M129.500 279v18" stroke="#fff" /><path d="M129 284v10" stroke="#7d1b1b" strokeWidth="3" />
          <Crosshair x={158} y={442} />
          <Flash x={158} y={610} />
          <path d="M457 601h17v18h-17v-5M457 606v-5M453 608h5M453 611h5M469 606h-5v8h5M464 610h5" stroke="#d500f9" strokeWidth="1.500" fill="none" />
        </Canvas>
        <Head period="1日" vol="547.3 K" />
        <NameTag $bg="yellow" style={{ top: y(25425) }}>6857</NameTag>
      </Plot>
      <Scale>
        {ticks.map((p) => <Tick key={p} style={{ top: y(p) }}>{fmt(p)}</Tick>)}
        <Stack $bg="yellow" $w={60} style={{ top: y(25425) }}><span>25,425</span><span>−16.39%</span><span>06:25:35</span></Stack>
        <PriceTag $bg="slate" $tall style={{ top: y(25890) }}>25,890</PriceTag>
      </Scale>
      <TimeAxis>
        {[[112, "6月"], [297, "7月"], [491, "8月"]].map(([x, t]) => <TimeTick key={t} $b style={{ left: x }}>{t}</TimeTick>)}
        <TimeTag style={{ left: 158 }}>6月 09 (火)</TimeTag>
      </TimeAxis>
      <Corner />
    </Panel>
  );
}

const TagList = ({ tags, y }) => tags.map(([p, bg], i) => <PriceTag key={i} $bg={bg} style={{ top: y(p) }}>{fmt(p)}</PriceTag>);

function SecondsPanel() {
  const y = (p) => 96 + (25700 - p) * 0.5384;
  const fx = (v) => v / 2.306 - 56;
  const fy = (v) => v / 2.178 - 13;
  const ticks = range(25800, 24800, 100);
  const sparse = [965, 1006, 1034, 1050, 1068, 1078, 1088, 1105, 1121, 1132, 1144, 1155].map(fx);
  const dense = Array.from({ length: 118 }, (_, i) => 1 + i * 3);
  const blue = Array.from({ length: 117 }, (_, i) => [1 + i * 3, lerp([[130, 767], [300, 772], [560, 777], [800, 781], [945, 783]], (57 + i * 3) * 2.306)]).map(([x, v]) => [x, fy(v)]);
  const R = (a, b, t, d, fill) => <rect x={fx(a)} y={fy(t)} width={fx(b) - fx(a)} height={fy(d) - fy(t)} fill={fill} />;
  const vols = [[938, 980, 1002, "b"], [985, 1017, 1202, "s"], [1022, 1033, 1309, "b"], [1040, 1051, 1315, "s"], [1056, 1068, 1313, "s"], [1070, 1075, 1320, "b"], [1081, 1091, 1318, "b"], [1096, 1109, 1311, "s"], [1113, 1122, 1318, "b"], [1125, 1131, 1320, "s"], [1135, 1141, 1320, "b"], [1147, 1153, 1320, "s"]].map(([a, b, t, k]) => [fx(a), fx(b), fy(t), k]);
  const tiny = Array.from({ length: 116 }, (_, i) => [1 + i * 3, 3 + i * 3, 595 - Math.floor(noise(i) * 4), noise(i + 50) > 0.5 ? "b" : "s"]);
  return (
    <Panel $scale={64}>
      <Plot>
        <Canvas>
          <Grid ys={ticks.map(y)} />
          {R(959, 1600, 45, 204, "#443a14")}
          {R(959, 1600, 196, 204, "#54330f")}
          {R(959, 1600, 204, 661, "#022e33")}
          {R(1001, 1600, 204, 571, "#17535f")}
          {R(1001, 1600, 571, 629, "#0b3036")}
          <path d={`M${fx(959)} 8H3000`} stroke="#8a7a20" />
          <path d="M370.500 0V3000" stroke="#7c7418" strokeDasharray="1 4" />
          <Dots xs={dense} y={y(25275) + 1} color="#a80a0e" />
          <Dots xs={sparse} y={y(25275) + 1} color="#a82a3a" />
          <Dots xs={dense} y={y(25100)} color="#a6a6a6" />
          <Dots xs={sparse} y={y(25100)} color="#b8b8b8" />
          <Crosses pts={blue} />
          <path d={`M${fx(943)} 346H3000`} stroke="#16b3c9" strokeWidth="2" />
          <Squares from={0} to={3000} y={346.5} />
          <Candles data={SEC} fx={fx} fy={fy} sx={2.306} />
          <Crosses color="#2f86e8" pts={[[1062, 360], [1075, 363], [1084, 367], [1101, 382], [1117, 389], [1129, 395], [1140, 399], [1149, 404]].map(([a, b]) => [fx(a), fy(b)])} />
          <path d={`M${fx(983)} 206.500H${fx(1150)}`} stroke="#8fb070" strokeDasharray="5 6" />
          <path d={`M${fx(1002)} ${fy(206)}L${fx(1150)} ${fy(572)}`} stroke="#5a6468" strokeDasharray="5 5" />
          <Bars data={vols.concat(tiny)} base={596} />
          <path d={`M${fx(935)} ${fy(1320)}L${fx(955)} ${fy(1298)}L${fx(983)} ${fy(1288)}L${fx(1150)} ${fy(1280)}`} stroke="#6b6a20" strokeDasharray="1 3" fill="none" />
        </Canvas>
        <Head period="15秒" vol="13 K" folded />
        <Gap $top={10} $warm><span>Daily Gap</span><b>1.98%</b></Gap>
        <Watermark><TvMark s={32} fill="#d6d6d6" /></Watermark>
        <NameTag $bg="blue" style={{ top: y(25559) }}>VWAP</NameTag>
        <NameTag $bg="red" style={{ top: y(25275) }}>week :LL</NameTag>
        <NameTag $bg="white" style={{ top: y(25100) }}>week :w_op</NameTag>
        <NameTag $bg="sky" style={{ top: 592 }}>Volume</NameTag>
        <NameTag $bg="yellow" style={{ top: 575 }}>Volume MA</NameTag>
      </Plot>
      <Scale>
        {ticks.filter((p) => p > 24800).map((p) => <Tick key={p} style={{ top: y(p) }}>{fmt(p)}</Tick>)}
        <TagList y={y} tags={[[25865, "yellow"], [25805, "green"], [25730, "ash"], [25675, "gray"], [25625, "pink"], [25559, "blue"], [25540, "green"], [25310, "gray"], [25340, "cyan"], [25275, "red"], [25235, "amber"], [25195, "pink"], [25100, "white"]]} />
        <PriceTag $bg="yellow" $w={44} style={{ top: 249 }}>00:06</PriceTag>
        <PriceTag $bg="sky" $w={36} style={{ top: 592 }}>13 K</PriceTag>
        <PriceTag $bg="yellow" $w={59} style={{ top: 575 }}>117.39 K</PriceTag>
      </Scale>
      <TimeAxis>
        {[[22, "14:51"], [107, "15:00"], [169, "15:06"], [255, "15:15"], [378, "9"], [471, "09:08"], [541, "09:15"]].map(([x, t]) => <TimeTick key={t} $b={t === "9"} style={{ left: x }}>{t}</TimeTick>)}
      </TimeAxis>
      <Corner />
    </Panel>
  );
}

function MainPanel() {
  const y = (p) => 18 + (27300 - p) * 0.4218;
  const ax = (v) => v / 2.45 - 3, ay = (v) => 58 + v / 3;
  const bx = (v) => 297 + v / 1.823, by = (v) => 638 + v / 2.45;
  const cx = (v) => 1117 + v / 2.063, cy = (v) => 578 + v / 2.24;
  const ticks = range(27300, 24400, 100);
  const xs8 = DAY8.map((d) => bx(d.x));
  const tail = [110, 153, 182].map(cx);
  const prevXs = PREV.map((d) => ax(d.x)).concat(312);
  const small = Array.from({ length: 120 }, (_, i) => 683 + i * 7.4).filter((x) => !VOLS.some(([a, b]) => x + 6 > a && x < b))
    .map((x, i) => [bx(x), bx(x + 5), by(1443 + noise(i) * 30), noise(i + 99) > 0.45 ? "b" : "s"]);
  const prevVol = Array.from({ length: 74 }, (_, i) => [1 + i * 4, 4 + i * 4, 1247 - 3 - noise(i + 7) * 16, noise(i + 31) > 0.5 ? "b" : "s"]);
  const big = [[87, 130, 800, "b"], [134, 169, 1147, "s"], [175, 192, 1402, "s"]].map(([a, b, t, k]) => [cx(a), cx(b), cy(t), k]);
  const right = 4000;
  return (
    <Panel $active $scale={63}>
      <Plot>
        <Canvas>
          <rect width={ax(826)} height={ay(555)} fill="#22070b" />
          <rect y={ay(555)} width={ax(826)} height={ay(995) - ay(555)} fill="#0b0203" />
          <rect x={bx(65)} y={by(49)} width={cx(155) - bx(65)} height={by(1000) - by(49)} fill="#02040d" />
          <rect x={bx(65)} y={by(612)} width={cx(155) - bx(65)} height={by(755) - by(612)} fill="#071022" />
          <rect x={cx(388)} y={cy(213)} width={right} height={cy(571) - cy(213)} fill="#0d0204" />
          <rect x={cx(388)} y={cy(222)} width={right} height={cy(515) - cy(222)} fill="#24070c" />
          <path d={ticks.map((p) => `M0 ${Math.round(y(p)) + 0.5}H3000`).join("")} stroke="#fff" strokeOpacity=".055" />
          <path d="M322.500 0V3000M1181.500 0V3000" stroke="#2a1050" strokeDasharray="1 3" />
          <rect x={cx(153)} y={cy(99)} width={114} height={cy(226) - cy(99)} fill="#443a14" />
          <path d={`M${cx(153)} ${cy(99)}h114`} stroke="#8a7a20" />
          <rect x={cx(153)} y={cy(226)} width={114} height={cy(515) - cy(226)} fill="#17535f" />
          <rect x={cx(153)} y={cy(515)} width={114} height={cy(598) - cy(515)} fill="#022e33" />
          <rect x={cx(153)} y={cy(515)} width={114} height={cy(571) - cy(515)} fill="#0b3036" />

          <path d={`M0 ${ay(373)}H${ax(190)}`} stroke="#b39a28" />
          <path d={`M0 ${ay(511)}H${ax(480)}`} stroke="#b0222e" />
          <path d={`M0 ${Math.round(ay(580)) + 0.5}H${ax(797)}`} stroke="#b8a860" strokeDasharray="5 6" />
          <Crosses color="#4a55e8" pts={prevXs.map((x, i) => [x, i === prevXs.length - 1 ? ay(448) : ay(lerp([[0, 445], [150, 448], [240, 451], [330, 444], [520, 441], [660, 436], [740, 436]], (x + 3) * 2.45))])} />
          <Candles data={PREV} fx={ax} fy={ay} sx={2.45} />
          <path d={`M${ax(750)} ${ay(556)}H${ax(790)}`} stroke="#158a80" />
          <path d={`M${ax(769)} ${ay(554)}H${ax(823)}`} stroke="#18b0c8" strokeWidth="2" />
          <text x={ax(456)} y={ay(494) + 4} fontSize="9" fill="#8a222c">1230</text>
          <text x={ax(800)} y={ay(540) + 4} fontSize="9" fill="#1fb5cc">1530</text>
          <path d={`M0 ${ay(94)}H${ax(738)}L${ax(769)} ${ay(291)}H1157L1171 231L1191 299L1206 299.500`} stroke="#d03c47" strokeWidth="2" fill="none" />

          <Dots xs={prevXs.concat([1])} y={by(30)} color="#b4b0b0" r={2.5} />
          <Dots xs={prevXs.concat([1])} y={by(165)} color="#9a1c28" r={2.5} />
          <Dots xs={xs8.concat(tail)} y={by(572)} color="#ad1420" />
          <Dots xs={[xs8[0]].concat(xs8.slice(3), tail)} y={by(753)} color="#a8acb4" />
          <path d={`M${bx(46)} ${Math.round(by(606)) + 0.5}H${cx(130)}`} stroke="#b0a038" strokeDasharray="6 4" />
          <path d={`M${cx(100)} ${cy(695)}H3000`} stroke="#12b5cc" strokeWidth="2" />
          <Squares from={0} to={3000} y={888.5} />
          <Crosses pts={DAY8.filter((d) => d.x !== 103 && d.x !== 132).map((d) => [bx(d.x), by(lerp(VWAP, d.x))]).concat([[cx(182), cy(406)]])} />
          <Candles data={DAY8} fx={bx} fy={by} sx={1.823} />
          <Candles data={TODAY} fx={cx} fy={cy} sx={2.063} />
          <path d={`M${cx(132)} ${Math.round(cy(393)) + 0.5}H${cx(190)}`} stroke="#8fb070" strokeDasharray="5 6" />
          <path d={`M${bx(905)} ${by(334)}H${bx(1362)}`} stroke="#9c2832" />
          <text x={bx(1345)} y={by(323) + 4} fontSize="9" fill="#8f2630">1230</text>
          <path d={`M${bx(888)} ${Math.round(by(371)) + 0.5}H${bx(1132)}`} stroke="#a89a20" />

          <Bars data={VOLS.map(([a, b, t, k]) => [bx(a), bx(b), by(t), k]).concat(small, prevVol, big)} base={1247} />
          <path d={"M" + VOLMA.map(([a, b]) => `${bx(a)} ${by(b)}`).join("L")} stroke="#5c5c22" strokeDasharray="1 3" fill="none" />
          <circle cx={bx(67)} cy={by(975)} r="4" fill="#8a4a86" stroke="#b03060" />
          <Crosshair x={1391} y={612} />
          <Flash x={1205} y={1234} />
        </Canvas>
        <Head main period="2" vol="116.5 K" folded />
        <Gap $top={8}><span>Daily Gap</span><b>1.98%</b></Gap>
        <NameTag $bg="coral" style={{ top: y(26632) }}>SMA:MA</NameTag>
        <PlusTag aria-label="Add alert" style={{ top: y(25890) }}><Icon n="plusC" s={24} w={1.5} /></PlusTag>
        <NameTag $bg="blue" style={{ top: y(25540) }}>VWAP</NameTag>
        <NameTag $bg="yellow" style={{ top: y(25425) }}>6857</NameTag>
        <NameTag $bg="red" style={{ top: y(25275) }}>week :LL</NameTag>
        <NameTag $bg="white" style={{ top: y(25100) }}>week :w_op</NameTag>
        <NameTag $bg="sky" style={{ top: 1206 }}>Volume</NameTag>
        <NameTag $bg="yellow" style={{ top: 1194 }}>Volume MA</NameTag>
      </Plot>
      <Scale>
        {ticks.map((p) => <Tick key={p} style={{ top: y(p) }}>{fmt(p)}</Tick>)}
        <TagList y={y} tags={[[26815, "green"], [26685, "gray"], [26632, "coral"], [26665, "pink"], [26380, "green"], [26285, "blue"], [26270, "green"], [26160, "gray"], [26130, "pink"], [26150, "green"], [26055, "pink"], [25990, "blue"], [26020, "gray"], [26010, "gray"], [25955, "pink"], [25865, "yellow"], [25807, "gray"], [25805, "green"], [25735, "pink"], [25725, "blue"], [25730, "ash"], [25675, "gray"], [25625, "pink"], [25545, "gray"], [25540, "green"], [25480, "pink"], [25310, "gray"]]} />
        <Stack $bg="yellow" $w={51} style={{ top: y(25425) }}><span>25,425</span><span>−4.99%</span><span>00:26</span></Stack>
        <TagList y={y} tags={[[25340, "cyan"], [25275, "red"], [25235, "amber"], [25195, "pink"], [25100, "white"], [24835, "blue"], [24715, "gray"], [24670, "pink"]]} />
        <PriceTag $bg="slate" $tall style={{ top: y(25890) }}>25,890</PriceTag>
        <PriceTag $bg="sky" $w={53} style={{ top: 1206 }}>116.5 K</PriceTag>
        <PriceTag $bg="yellow" $w={59} style={{ top: 1194 }}>147.28 K</PriceTag>
      </Scale>
      <TimeAxis>
        {[[17, "13:00"], [75, "13:30"], [135, "14:00"], [193, "14:30"], [251, "15:00"], [333, "8"], [553, "10:00"], [660, "10:30"], [725, "11:00"], [793, "12:30"], [858, "13:00"], [919, "13:30"], [983, "14:00"], [1045, "14:30"], [1107, "15:00"], [1191, "9"], [1267, "09:30"], [1338, "10:00"], [1473, "11:00"], [1542, "11:30"], [1611, "12:00"], [1679, "12:30"], [1748, "13:00"]].map(([x, t]) => (
          <TimeTick key={x} $b={t.length === 1} style={{ left: x }}>{t}</TimeTick>
        ))}
        <TimeTag style={{ left: 1391 }}>{"6月 09 (火)   10:24"}</TimeTag>
      </TimeAxis>
      <Corner><Icon n="hex" s={18} w={1.6} /></Corner>
    </Panel>
  );
}

/* ---------- bars ---------- */
const W = "#f0f3fa";
const TABS = [
  ["6857", 1, W, "#9c1150", "A", 11], ["9984", 0, "#131722", "#fff", "*bars"], ["4568", 1, W, "#1b8fd0", "*leaf"], ["6963", 0, "#e60012", "#fff", "ROHM", 5],
  ["5803", 1, W, "#1677c8", "*wave"], ["7974", 1, "#e60012", "#fff", "N", 10], ["7203", 1, "#eb0a1e", "#fff", "*ring"], ["285A", 1, W, "#111", "K", 12],
  ["6762", 0, "#0046ad", "#fff", "TDK", 6], ["1321", 1, W, "#12a594", "N", 10], ["6981", 1, "#e5173f", "#fff", "m", 12], ["6976", 1, W, "#e0262c", "TY", 9],
  ["9831", 1, W, "#1450b4", "*house"], ["4022", 1, W, "#9a9aa0", "*peak"], ["4392", 0, W, "#4a9cc9", "IE", 10], ["6976", 1, W, "#e0262c", "TY", 9],
  ["6762", 0, "#0046ad", "#fff", "TDK", 6], ["7267", 1, "#e60012", "#fff", "H", 11],
  ["IF SELL 9"], ["HnSHOU"], ["SELL in 9"], ["じり下げ"], ["場中決算"], ["9984SEL"],
];
const CIRCLES = ["0", "2", "4", "D", "M", "W", "F", "P", "O", "C", "個", "V", "Z"];
const LEFT = ["cross", "trend", "fib", "pattern", "forecast", "rect", "text", "heart", "|", "ruler", "zoom", "|", "magnet", "penlock", "lock", "eye", "link", "|", "trash"];
const DRAW = ["hray", "ray", "rayInfo", "channel", "arrowUp", "price", "rect", "gann", "arrowDn", "range", "longp", "vrange", "path", "fib", "pin", "forecast", "text"];

export default function App() {
  return (
    <Page>
      <Global />
      <TabBar>
        <Tabs>
          {TABS.map(([t, up, bg, fg, g, fs], i) => (
            <Tab key={i} $on={i === 0}>
              {bg ? <Badge $bg={bg} $fg={fg} $fs={fs}>{g[0] === "*" ? <Mark n={g.slice(1)} /> : g}</Badge> : (
                <Badge $bg="#d8d8d8" $fg="#111">
                  <svg width="12" height="12" viewBox="0 0 12 12" fill="none" stroke="#151515" strokeWidth="2"><circle cx="6" cy="5" r="3.500" /><path d="M6 5v6" /></svg>
                </Badge>
              )}
              <TabText $fade={!bg}>{t}</TabText>
              {bg && <Arrow $up={up} />}
            </Tab>
          ))}
        </Tabs>
        <WindowTools>
          <Tool aria-label="New tab"><Icon n="plus" /></Tool>
          <Spacer />
          <Row $g={11}><Icon n="tabs" /><Sep $m={1} /></Row>
          {["more", "min", "restore", "exit"].map((n) => <WindowBtn key={n} $dim={n === "more"} aria-label={n}><Icon n={n} s={24} w={1.5} /></WindowBtn>)}
        </WindowTools>
      </TabBar>

      <ToolBar>
        <Avatar>
          <svg width="26" height="26" viewBox="0 0 26 26"><path d="M15 3l-1 8-2 4-2 9" stroke="#c4501e" fill="none" /><path d="M2 9h22M2 16h22M8 2v22M19 2v22" stroke="#1c1c2c" /></svg>
          <Count>54</Count>
        </Avatar>
        <Search>
          <input defaultValue="6857" aria-label="Symbol" />
          <span><Icon n="gem" s={24} /></span>
        </Search>
        <Row $ml={7}><Tool $w={34} aria-label="Compare"><Icon n="plusC" s={30} /></Tool></Row>
        <Sep $m={5} />
        <Row $g={1}>
          {["15秒", "2分", "10分", "30分", "1時間", "4時間", "日", "週", "月"].map((t) => <Tool key={t} $px={6} $fs={13} $on={t === "2分"}>{t}</Tool>)}
        </Row>
        <Tool $w={24} aria-label="Intervals"><Icon n="chev" s={24} w={1.4} /></Tool>
        <Sep $m={6} />
        <Row $g={4}>
          <Tool $w={34} aria-label="Candles"><Icon n="candles" /></Tool>
          <Tool $w={34} $on aria-label="Volume candles"><Icon n="candlesB" /></Tool>
          <Tool $w={24} aria-label="Chart types"><Icon n="chev" s={24} w={1.4} /></Tool>
        </Row>
        <Sep $m={4} />
        <Row $ml={3}>
          <Tool><Icon n="indic" />インジケーター</Tool>
          <Row $ml={10}><Tool $w={24} aria-label="Favourites"><Icon n="chev" s={24} w={1.4} /></Tool></Row>
          <Tool $w={38} aria-label="Templates"><Icon n="grid" /></Tool>
        </Row>
        <Row $g={6} $ml={3}>{CIRCLES.map((t) => <Round key={t}>{t}</Round>)}</Row>
        <Row $ml={7}><Sep $m={8} /></Row>
        <Row $g={15}>
          <Tool><Icon n="alarm" />アラート</Tool>
          <Tool><Icon n="replay" />リプレイ</Tool>
        </Row>
        <Row $ml={9}><Tool $w={24} aria-label="Replay options"><Icon n="chev" s={24} w={1.4} /></Tool></Row>
        <Sep $m={4} />
        <Row $g={5} $ml={1}>
          <Tool $w={34} aria-label="Undo"><Icon n="undo" /></Tool>
          <Tool $w={34} $dim aria-label="Redo"><Icon n="redo" /></Tool>
        </Row>
        <Spacer />
        <Row>
          <Tool $w={34} aria-label="Layout"><Icon n="layout" /></Tool>
          <Row $ml={6}><LayoutName>JP stocks<small>保存</small></LayoutName></Row>
          <Row $ml={7}><Tool $w={24} aria-label="Layouts"><Icon n="chev" s={24} w={1.4} /></Tool></Row>
          <Row $ml={3}><Round $solid>J</Round></Row>
          <Row $ml={9}><Sep $m={5} /></Row>
          <Row $g={4}>
            {["bolt", "hex", "full", "cam"].map((n) => <Tool key={n} $w={34} aria-label={n}><Icon n={n} /></Tool>)}
          </Row>
          <Row $g={9} $ml={7}>
            <Split>
              <button><Badge $bg="#f0f0f0" $fg="#000"><TvMark s={13} fill="#0f0f0f" /></Badge>トレード</button>
              <button aria-label="Trade options"><Icon n="chev" s={24} w={1.4} /></button>
            </Split>
            <Post>投稿</Post>
          </Row>
        </Row>
      </ToolBar>

      <Body>
        <Side $gap={4}>
          {LEFT.map((n, i) => n === "|" ? <SideSep key={i} /> : (
            <SideBtn key={i} aria-label={n} $tone={n === "cross" ? "on" : n === "link" ? "white" : ""}><Icon n={n} s={28} /></SideBtn>
          ))}
          <Spacer />
          <SideBtn $tone="white" aria-label="Favourites"><Icon n="star" s={26} /></SideBtn>
        </Side>
        <Center>
          <Charts>
            <DailyPanel />
            <MainPanel />
            <SecondsPanel />
          </Charts>
          <RangeBar>
            {["1日", "5日", "1ケ月", "3ケ月", "6ケ月", "年初来", "1年", "5年", "すべて"].map((t) => <TextBtn key={t}>{t}</TextBtn>)}
            <Sep $m={-2} />
            <TextBtn aria-label="Go to date"><Icon n="goto" s={24} /></TextBtn>
            <Spacer />
            <TextBtn>09:05:23 UTC+9</TextBtn>
            <Row $ml={8}><TextBtn>配当調整</TextBtn></Row>
            <TextBtn aria-label="Expand"><Icon n="expand" s={22} w={1.6} /></TextBtn>
          </RangeBar>
          <TradeBar>
            <Paper><i><TvMark s={16} /></i><TextBtn>ペーパートレード</TextBtn></Paper>
            <Floating>
              <svg width="16" height="16" viewBox="0 0 16 16" fill="#575757" aria-hidden="true">
                {[2, 7, 12].map((v) => <path key={v} d={`M1 ${v}h2v2H1zM7 ${v}h2v2H7z`} />)}
              </svg>
              {DRAW.map((n, i) => <button key={i} aria-label={n}><Icon n={n} s={24} w={1.4} /></button>)}
            </Floating>
            <Spacer />
            <Row $g={12}>
              <TextBtn aria-label="Open panel"><Icon n="up" s={22} w={1.6} /></TextBtn>
              <TextBtn aria-label="Maximise"><Icon n="expand" s={22} w={1.6} /></TextBtn>
            </Row>
          </TradeBar>
        </Center>
        <Side $right $gap={11}>
          <SideBtn aria-label="Watchlist"><Icon n="book" /></SideBtn>
          <SideBtn aria-label="Alerts"><Icon n="clock" /><Count $side>44</Count></SideBtn>
          <SideBtn aria-label="Objects"><Icon n="layers" /></SideBtn>
          <SideBtn aria-label="Chats"><Icon n="chat" /></SideBtn>
          <Spacer />
          {["radar", "peaks", "cal", "feed", "bell"].map((n) => <SideBtn key={n} aria-label={n}><Icon n={n} /></SideBtn>)}
          <SideBtn $tone="white" $round aria-label="Products">
            <svg width="18" height="18" viewBox="0 0 18 18" fill="#0f0f0f">{[1, 7, 13].map((a) => [1, 7, 13].map((b) => <rect key={`${a}${b}`} x={a} y={b} width="4" height="4" />))}</svg>
          </SideBtn>
          <HelpSlot><SideBtn aria-label="Help"><Icon n="help" /></SideBtn></HelpSlot>
        </Side>
      </Body>
    </Page>
  );
}
